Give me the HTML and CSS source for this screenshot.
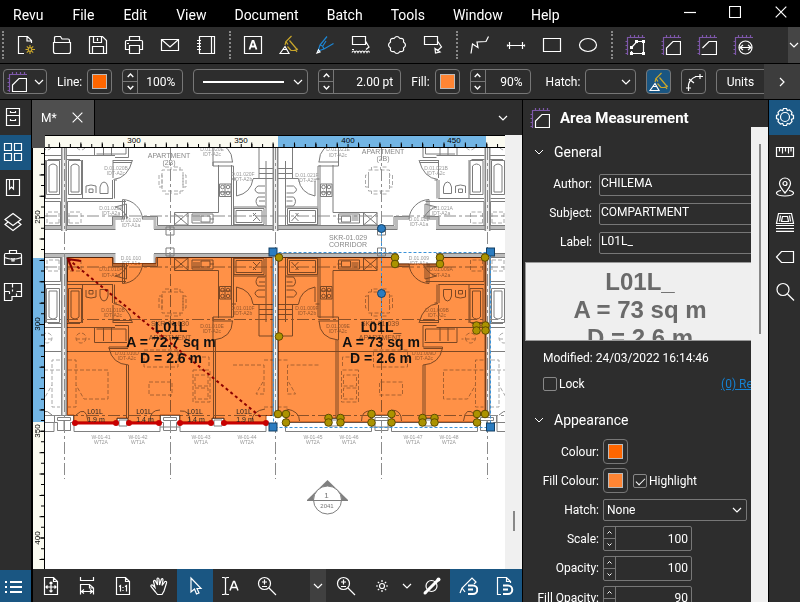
FILE: index.html
```
<!DOCTYPE html>
<html lang="en">
<head>
<meta charset="utf-8">
<title>Revu</title>
<link rel="stylesheet" href="styles.css">
</head>
<body>
<svg class="sprite" aria-hidden="true">
  <symbol id="i-new" viewBox="0 0 20 20"><path d="M8 18.500H2.500V1.500H11.500L15.500 5.500V8M11 2V6H15"/><path class="gold" d="M14 10v2.500M14 16v3M9.500 14.500h3M15.500 14.500h3.500M10.800 11.300l2 2M17.200 11.300l-2 2M10.800 17.700l2-2M17.200 17.700l-2-2"/><circle class="gold" cx="14" cy="14.500" r="1.800"/></symbol>
  <symbol id="i-open" viewBox="0 0 20 20"><path d="M2.500 7.500V2.500Q2.500 1.500 4 1.500H8.500L10 4H16Q17.500 4 17.500 5.500V7.500M1.500 7.500H18.500V16.500Q18.500 18.500 16.500 18.500H3.500Q1.500 18.500 1.500 16.500Z"/></symbol>
  <symbol id="i-save" viewBox="0 0 20 20"><path d="M1.500 1.500H14.500L18.500 5.500V18.500H1.500ZM5.500 1.500V7.500H13.500V1.500M9.500 3V6M4.500 18.500V11.500H15.500V18.500"/></symbol>
  <symbol id="i-print" viewBox="0 0 20 20"><path d="M5.500 5.500V1.500H15.500V5.500M5 14.500H1.500V6.500Q1.500 5.500 2.500 5.500H17.500Q18.500 5.500 18.500 6.500V14.500H15.500M5.500 10.500H15.500V18.500H5.500ZM3 8.500H5"/></symbol>
  <symbol id="i-mail" viewBox="0 0 20 20"><path d="M1.500 4.500H18.500V15.500H1.500ZM1.500 4.500L10 12L18.500 4.500"/></symbol>
  <symbol id="i-book" viewBox="0 0 20 20"><path d="M3.500 1.500H18.500V18.500H3.500ZM15.500 1.500V18.500M1 5.500H5M1 8.500H5M1 11.500H5M1 14.500H5"/></symbol>
  <symbol id="i-text" viewBox="0 0 20 20"><path d="M1.500 1.500H18.500V18.500H1.500Z"/><path stroke-width="1.800" d="M6.500 14.500L9.500 6H10.500L13.500 14.500M7.500 11.500H12.500"/></symbol>
  <symbol id="i-marker" viewBox="0 0 20 20"><path class="gold" d="M12.500 1L7 6.500L9 9.500M10.500 5.500L18.500 15M7 6.500L6 10M12 15.500H15L19 14M8.500 11.500L12 15.500M16.500 15L18 17"/><path d="M1 18.500L6 11.500L10 18.500ZM4 14.500H7.500"/></symbol>
  <symbol id="i-pen" viewBox="0 0 20 20"><path class="sky" d="M12 1.500L5 10L3 16L9 14L18.500 8.500M5 10Q8 10.500 9 14M11 6L7.500 11.500"/><path d="M2 18L3.500 15L5 17Z"/></symbol>
  <symbol id="i-callcloud" viewBox="0 0 20 20"><path d="M1.500 1.500H14.500V9.500H1.500ZM14.500 6L18 12L15 14.500M1 17.500q1.500-3 3 0q1.500-3 3 0q1.500-3 3 0q1.500-3 3 0q1.500-3 3 0q1.500-3 2.500 0M1 14.500H3"/></symbol>
  <symbol id="i-cloud" viewBox="0 0 20 20"><path d="M7 3.500Q10-.5 13 3.500Q17.500 3 16.500 7Q20.500 10 16.500 13Q17.500 17 13 16.500Q10 20.500 7 16.500Q2.500 17 3.500 13Q-.5 10 3.500 7Q2.500 3 7 3.500Z"/></symbol>
  <symbol id="i-callout" viewBox="0 0 20 20"><path d="M1.500 1.500H14.500V9.500H1.500ZM14.500 6L18.500 12L14 16M12 13.500L12.500 18L17 17Z"/></symbol>
  <symbol id="i-poly" viewBox="0 0 20 20"><path d="M1 18.500L2.500 9L8 12.500L7 7L16 6.500L18.500 1.500"/></symbol>
  <symbol id="i-length" viewBox="0 0 20 20"><path d="M1 10.500H19M3.500 7V14M16.500 7V14M1.500 9.500V11.500M18.500 9.500V11.500"/></symbol>
  <symbol id="i-rect" viewBox="0 0 20 20"><path d="M1.500 3.500H18.500V16.500H1.500Z"/></symbol>
  <symbol id="i-oval" viewBox="0 0 20 20"><ellipse cx="10" cy="10" rx="8.500" ry="6.500"/></symbol>
  <symbol id="i-frame" viewBox="0 0 20 20"><path class="violet" d="M2.500 20V2.500H20M.5 6.500H2M.5 10.500H2M.5 14.500H2M.5 18.500H2M5.500 0V2M9.500 0V2M13.500 0V2M17.500 0V2"/></symbol>
  <symbol id="i-perim" viewBox="0 0 20 20"><use href="#i-frame"/><path d="M6.500 12.500L12 6.500H18.500V18.500H6.500V16"/><path class="solid" d="M5 11h3v3h-3zM10 5h3v3h-3zM17 5h3v3h-3zM17 17h3v3h-3zM5 17h3v3h-3z"/></symbol>
  <symbol id="i-area" viewBox="0 0 20 20"><use href="#i-frame"/><path d="M5.500 19V13L12 6.500H19.500V19.500H5.500Z"/></symbol>
  <symbol id="i-polylen" viewBox="0 0 20 20"><use href="#i-frame"/><path d="M5.500 13L12 6.500H19.500V19.500H4.500"/></symbol>
  <symbol id="i-diam" viewBox="0 0 20 20"><use href="#i-frame"/><circle cx="12.500" cy="12.500" r="6.500"/><path d="M7 12.500H18M10 10L7 12.500L10 15M15 10L18 12.500L15 15"/></symbol>
  <symbol id="i-arc" viewBox="0 0 20 20"><path d="M4.500 15Q4 8 12 4.500M4.500 13V19M2 16H7M11 4.500H19M16 2V7M5 7l5 4"/></symbol>
  <symbol id="i-down" viewBox="0 0 10 10"><path d="M1 3L5 7L9 3"/></symbol>
  <symbol id="i-up" viewBox="0 0 10 10"><path d="M1 7L5 3L9 7"/></symbol>
  <symbol id="i-right" viewBox="0 0 10 10"><path d="M3 1L7 5L3 9"/></symbol>
  <symbol id="i-x" viewBox="0 0 12 12"><path d="M.7.7L11.300 11.300M11.300.7L.7 11.300"/></symbol>
  <symbol id="i-min" viewBox="0 0 12 12"><path d="M0 6.500H12"/></symbol>
  <symbol id="i-max" viewBox="0 0 12 12"><path d="M.5.5H11.500V11.500H.5Z"/></symbol>
  <symbol id="i-cabinet" viewBox="0 0 20 20"><path d="M3.500 1.500H16.500V18.500H3.500ZM3.500 8.500H16.500M7.500 4V5.500H12.500V4M7.500 12V13.500H12.500V12"/></symbol>
  <symbol id="i-grid" viewBox="0 0 20 20"><path d="M1.500 1.500H8.500V8.500H1.500ZM11.500 1.500H18.500V8.500H11.500ZM1.500 11.500H8.500V18.500H1.500ZM11.500 11.500H18.500V18.500H11.500Z"/></symbol>
  <symbol id="i-bookmark" viewBox="0 0 20 20"><path d="M3.500 2.500H16.500V18.500H3.500ZM6.500 2.500V12L8.500 10L10.500 12V2.500"/></symbol>
  <symbol id="i-layers" viewBox="0 0 20 20"><path d="M10 1.500L18 7.500L10 13.500L2 7.500ZM5 10L2 12.500L10 18.500L18 12.500L15 10"/></symbol>
  <symbol id="i-case" viewBox="0 0 20 20"><path d="M2.500 6.500H17.500Q18.500 6.500 18.500 8V17.500H1.500V8Q1.500 6.500 2.500 6.500ZM6.500 6V3.500H13.500V6M1.500 10.500Q10 14 18.500 10.500M9 11v3h2v-3"/></symbol>
  <symbol id="i-plan" viewBox="0 0 20 20"><path d="M9 18.500V14.500H13.500V11.500M13.500 14.500H18.500V1.500H9.500V5.500M1.500 9V1.500H9.500M9 18.500H1.500V9.500H6.500M9.500 7.500V9.500M13.500 9.500H18.500M6.500 9.500V12"/></symbol>
  <symbol id="i-list" viewBox="0 0 20 20"><path stroke-width="2" d="M6 5H18M6 10H18M6 15H18M1 5H3M1 10H3M1 15H3"/></symbol>
  <symbol id="i-gear" viewBox="0 0 20 20"><circle cx="10" cy="10" r="4.500"/><path d="M8.500 1.500H11.500L12.300 3.500L14.600 2.900L17 5.400L16.400 7.600L18.500 8.500V11.500L16.400 12.400L17 14.600L14.600 17L12.300 16.400L11.500 18.500H8.500L7.700 16.400L5.400 17L3 14.600L3.600 12.400L1.500 11.500V8.500L3.600 7.600L3 5.400L5.400 2.900L7.700 3.500Z"/></symbol>
  <symbol id="i-ruler" viewBox="0 0 20 20"><path d="M1.500 5.500H18.500V14.500H1.500ZM4.500 6V9.500M7.500 6V11.500M10.500 6V9.500M13.500 6V11.500M16 6V9.500"/></symbol>
  <symbol id="i-pin" viewBox="0 0 20 20"><path d="M10 16Q4.500 9.500 4.500 6.500A5.500 5.500 0 0 1 15.500 6.500Q15.500 9.500 10 16ZM6 13.500Q1 14.500 1.500 16.500Q3 19 10 19Q17 19 18.500 16.500Q19 14.500 14 13.500"/><circle cx="10" cy="6.500" r="2"/></symbol>
  <symbol id="i-sets" viewBox="0 0 20 20"><path d="M3.500 1.500H16.500L18.500 11.500H1.500ZM7.500 4.500H12.500L13.500 9.500H6.500ZM5.500 3.500L4.500 9.500M14.500 3.500L15.500 9.500M1 13.500H19M1 16.500H19M1 19.300H19"/></symbol>
  <symbol id="i-tag" viewBox="0 0 20 20"><path d="M1.500 10L6.500 4.500H18.500V15.500H6.500Z"/></symbol>
  <symbol id="i-search" viewBox="0 0 20 20"><circle cx="8" cy="7.500" r="6"/><path d="M12.500 12L19 18.500"/></symbol>
  <symbol id="i-fit" viewBox="0 0 20 20"><path d="M3.500 1.500H12.500L16.500 5.500V18.500H3.500ZM12.500 1.500V5.500H16.500M10 6V16M5 11H15M8.500 7.500L10 6L11.500 7.500M8.500 14.500L10 16L11.500 14.500M6.500 9.500L5 11L6.500 12.500M13.500 9.500L15 11L13.500 12.500"/></symbol>
  <symbol id="i-width" viewBox="0 0 20 20"><path d="M3.500 1V4.500H16.500V1M3.500 18.500V8.500H12.500L16.500 12V18.500M12.500 8.500V12H16.500M4.500 15.500H15.500M7 13.500L4.500 15.500L7 17.500M13 13.500L15.500 15.500L13 17.500"/></symbol>
  <symbol id="i-actual" viewBox="0 0 20 20"><path d="M3.500 1.500H12.500L16.500 5.500V18.500H3.500ZM12.500 1.500V5.500H16.500M6 10.500L7.500 9.500V15.500M12 10.500L13.500 9.500V15.500M10 11v1M10 14v1"/></symbol>
  <symbol id="i-hand" viewBox="0 0 20 20"><path d="M6.500 16L2 10.500Q1.500 8.500 3.500 9L6 11.500L4.500 5.500Q5 3.500 6.500 5L8.500 9L8 3Q8.700 1 10 3L10.500 9L12.500 3Q14 2 14 4L13 9.500L16 5.500Q18 5 17.500 7L15 15L13 18.500H8.500Z"/></symbol>
  <symbol id="i-cursor" viewBox="0 0 20 20"><path d="M6 2V16L9.500 13L11.500 18L14 17L12 12.500H16Z"/></symbol>
  <symbol id="i-select" viewBox="0 0 20 20"><path d="M1 1.500H3Q4.500 1.500 4.500 3V17Q4.500 18.500 3 18.500H1M8 1.500H6Q4.500 1.500 4.500 3M8 18.500H6Q4.500 18.500 4.500 17"/><path stroke-width="1.500" d="M9 14.500L12.500 5.500H13.500L17 14.500M10.500 11.500H15.500"/></symbol>
  <symbol id="i-zoom" viewBox="0 0 20 20"><circle cx="7.500" cy="7.500" r="6"/><path d="M12 12L19 19M7.500 3.500V8.500M5 6H10M5 10.500H10"/></symbol>
  <symbol id="i-sun" viewBox="0 0 20 20"><circle cx="10" cy="10" r="2.500"/><path d="M10 4V6M10 14V16M4 10H6M14 10H16M5.800 5.800L7.200 7.200M12.800 12.800L14.200 14.200M14.200 5.800L12.800 7.200M7.200 12.800L5.800 14.200"/></symbol>
  <symbol id="i-compare" viewBox="0 0 20 20"><circle cx="9.500" cy="10" r="5.500"/><path stroke-width="3" d="M3 17L16 4"/><circle class="solid" cx="3" cy="17" r="1.500"/><circle class="solid" cx="16.500" cy="3.500" r="2"/></symbol>
  <symbol id="i-snapa" viewBox="0 0 20 20"><path d="M2 17L4 12L14 2L18 6L16 8M4 12L7 16"/><path stroke-width="2" d="M10 9.500H15A3 3 0 0 1 15 18H10M10 13.500H15"/></symbol>
  <symbol id="i-snapb" viewBox="0 0 20 20"><path d="M7 18.500H3.500V1.500H12.500L16.500 5.500V7M12.500 1.500V5.500H16.500"/><path stroke-width="2" d="M9 9.500H14A3 3 0 0 1 14 18H9M9 13.500H14"/></symbol>
</svg>

<div class="app">
  <header class="menubar">
    <nav class="menus" aria-label="Main menu">
      <button>Revu</button><button>File</button><button>Edit</button><button>View</button><button>Document</button><button>Batch</button><button>Tools</button><button>Window</button><button>Help</button>
    </nav>
    <div class="window-controls">
      <button aria-label="Minimise"><svg><use href="#i-min"/></svg></button>
      <button aria-label="Maximise"><svg><use href="#i-max"/></svg></button>
      <button aria-label="Close"><svg><use href="#i-x"/></svg></button>
    </div>
  </header>

  <div class="toolbar" role="toolbar" aria-label="Tools">
    <span class="grip first"></span>
    <button aria-label="New"><svg><use href="#i-new"/></svg></button>
    <button aria-label="Open"><svg><use href="#i-open"/></svg></button>
    <button aria-label="Save"><svg><use href="#i-save"/></svg></button>
    <button aria-label="Print"><svg><use href="#i-print"/></svg></button>
    <button aria-label="Email"><svg><use href="#i-mail"/></svg></button>
    <button aria-label="Binder"><svg><use href="#i-book"/></svg></button>
    <span class="grip"></span>
    <button aria-label="Text box"><svg><use href="#i-text"/></svg></button>
    <button aria-label="Highlight"><svg><use href="#i-marker"/></svg></button>
    <button aria-label="Pen"><svg><use href="#i-pen"/></svg></button>
    <button aria-label="Cloud callout"><svg><use href="#i-callcloud"/></svg></button>
    <button aria-label="Cloud"><svg><use href="#i-cloud"/></svg></button>
    <button aria-label="Callout"><svg><use href="#i-callout"/></svg></button>
    <span class="grip"></span>
    <button aria-label="Polyline"><svg><use href="#i-poly"/></svg></button>
    <button aria-label="Dimension"><svg><use href="#i-length"/></svg></button>
    <button aria-label="Rectangle"><svg><use href="#i-rect"/></svg></button>
    <button aria-label="Ellipse"><svg><use href="#i-oval"/></svg></button>
    <span class="grip"></span>
    <button aria-label="Perimeter"><svg><use href="#i-perim"/></svg></button>
    <button aria-label="Area"><svg><use href="#i-area"/></svg></button>
    <button aria-label="Polylength"><svg><use href="#i-polylen"/></svg></button>
    <button aria-label="Diameter"><svg><use href="#i-diam"/></svg></button>
    <button class="overflow" aria-label="More tools"><svg class="tiny"><use href="#i-down"/></svg></button>
  </div>

  <div class="propbar">
    <div class="props">
      <button class="box tool-pick" aria-label="Area tool"><svg><use href="#i-area"/></svg><svg class="tiny"><use href="#i-down"/></svg></button>
      <div class="field"><span>Line:</span><button class="box swatch-btn" aria-label="Line colour"><i class="swatch line"></i></button></div>
      <div class="spin w61"><div class="steps"><button aria-label="More"><svg><use href="#i-up"/></svg></button><button aria-label="Less"><svg><use href="#i-down"/></svg></button></div><input aria-label="Line opacity" value="100%"></div>
      <div class="pick line-style"><select aria-label="Line style"><option></option></select><i class="stroke-sample"></i><svg class="tiny"><use href="#i-down"/></svg></div>
      <div class="spin w83"><div class="steps"><button aria-label="More"><svg><use href="#i-up"/></svg></button><button aria-label="Less"><svg><use href="#i-down"/></svg></button></div><input aria-label="Line width" value="2.00 pt"></div>
      <div class="field"><span>Fill:</span><button class="box swatch-btn" aria-label="Fill colour"><i class="swatch fill"></i></button></div>
      <div class="spin w61"><div class="steps"><button aria-label="More"><svg><use href="#i-up"/></svg></button><button aria-label="Less"><svg><use href="#i-down"/></svg></button></div><input aria-label="Fill opacity" value="90%"></div>
      <div class="field hatch"><label for="hatch-top">Hatch:</label><div class="pick"><select id="hatch-top"><option></option></select><svg class="tiny"><use href="#i-down"/></svg></div></div>
      <button class="box active" aria-label="Highlight fill"><svg><use href="#i-marker"/></svg></button>
      <button class="box" aria-label="Arc"><svg><use href="#i-arc"/></svg></button>
      <button class="box units">Units</button>
    </div>
    <button class="overflow" aria-label="More properties"><svg class="tiny"><use href="#i-right"/></svg></button>
  </div>

  <main class="main">
    <nav class="rail left" aria-label="Left panels">
      <button aria-label="File access"><svg><use href="#i-cabinet"/></svg></button>
      <button class="active" aria-label="Thumbnails"><svg><use href="#i-grid"/></svg></button>
      <button aria-label="Bookmarks"><svg><use href="#i-bookmark"/></svg></button>
      <button aria-label="Layers"><svg><use href="#i-layers"/></svg></button>
      <button aria-label="Tool chest"><svg><use href="#i-case"/></svg></button>
      <button aria-label="Spaces"><svg><use href="#i-plan"/></svg></button>
      <button class="active last" aria-label="Markups list"><svg><use href="#i-list"/></svg></button>
    </nav>

    <section class="document">
      <div class="tabs">
        <div class="tab"><span>M*</span><button aria-label="Close tab"><svg class="tab-x"><use href="#i-x"/></svg></button></div>
        <button class="tab-menu" aria-label="Tab list"><svg class="tiny"><use href="#i-down"/></svg></button>
      </div>
      <div class="view">
        <svg class="sheet" role="img" aria-label="Floor plan">
          <defs>
            <g id="rooms">
              <path class="w3" d="M64 255.500H114V264.500H125M142 264.500H155V255.500H276"/>
              <path class="w1" d="M64 253.500H115.500M154 253.500H276M64 257.500H112.500V266.500H125M142 266.500H157.500V257.500H276"/>
              <path class="w1" d="M67.500 257V281.500H126M67.500 284.500H113M114.500 284.500V303H117M112.500 284V303M82.500 284V323"/>
              <path class="dash" d="M69 260H81V271H69Z"/>
              <path class="w1" d="M122.500 264V283.500A21 21 0 0 0 142.500 264M126.500 264V279L115 276Q122 275 128 265M124.500 264V283"/>
              <path class="w1" d="M68.500 288.500H81.500V322.500H68.500ZM71 291H79V317Q75 321 71 317Z"/>
              <path class="w1" d="M86 290V297Q91 299 96 297V290M89 290.500H93V294H89ZM100 289.500H108V296Q107 301 104 301Q101 301 100 296Z"/>
              <path class="w1" d="M113.500 303.500Q128 305 132.500 323M113 305V323"/>
              <path class="w1" d="M67 323.500H80M67 327.500H115M113 320.500H132M113 322.500H132M115 325.500H128.500V347H109V348.500H128"/>
              <path class="w1" d="M94.500 327V342.500H127M96.500 329H126V341M103.500 328V341M111.500 328V341"/>
              <path class="w1" d="M109 348Q112 364 128.500 365M126.500 365V418M128.500 365V418"/>
              <path class="w1" d="M174.500 258V270.500H218.500V318M174 258H188V270M188 258L174 270M174 258L188 270M192 260H213V269H192ZM201 261H210V267H201ZM193 263H200M193 265H200M193 267H200M210 264H214M170 252V257"/>
              <path class="w1" d="M231.500 257V318M233.500 257V317H213V321H233M213 317V340M215.500 340V420M213.500 340V420"/>
              <path class="w1" d="M219.500 286.500H231V299H219.500ZM220 291H231M225 287V299"/><circle class="w1" cx="222.500" cy="290" r="1.800"/><circle class="w1" cx="228" cy="290" r="1.800"/><circle class="w1" cx="222.500" cy="296" r="1.800"/><circle class="w1" cx="228" cy="296" r="1.800"/>
              <path class="w1" d="M234 258.500H264V274.500H234ZM236 260.500H262V272.500H236ZM253 270L260 262M253 267L256 270M253 262L257 266M234 276H266V257M266 276V322"/>
              <path class="w1" d="M265 277H258Q254 282 258 286H265M259 282H265M265 290H258Q252 293 258 297H265"/>
              <path class="w1" d="M236.500 302V287Q251 290 253 304M253 304.500H276M259 309.500H276M259 314.500H276M259 304V336H276M236 304H232"/>
              <path class="w1" d="M213.500 340Q232 338 232.500 321"/>
              <path class="dash" d="M162 292H183V313H162ZM165 289h6v3M174 289h6v3M165 316h6v-3M174 316h6v-3M159 296h3v12h-3zM183 296h3v12h-3z"/>
              <path class="dash" d="M68 370H108V399H84L76 385M68 360H76V407H68M149 382H172V395H149ZM193 370H210V402H193ZM195 375H208V386H195ZM195 388H208V399H195ZM144 350H178V367H144ZM196 357H209V366M233 365H264V394H256L264 380M264 360H276M264 407H276M76 339H90"/>
              <circle class="dash" cx="81" cy="338" r="5"/>
              <path class="w1" d="M166 248H174V256H166Z"/>
            </g>
            <g id="base">
              <path class="col" d="M54.500 415.500H73.500V422.500H70.500V430.500H57.500V422.500H54.500ZM57.500 417.500H70.500V420.500H57.500ZM57.500 423V430M64 420V430"/>
              <path class="col" d="M74 422.500H117V418.500H128V422.500H160V431.500H74ZM119 420H127V426H119Z"/>
              <path class="col" d="M180 422.500H212V418.500H224V422.500H266V431.500H180ZM214 420H222V426H214Z"/>
              <path class="col" d="M160.500 415.500H179.500V422.500H176.500V430.500H163.500V422.500H160.500ZM163.500 417.500H176.500V420.500H163.500ZM160 427H180"/>
              <path class="w1" d="M76 415Q86 405 88 421M150 421Q150 410 160 410M180 411Q190 410 190 421M252 421Q252 411 265 409"/>
            </g>
            <g id="dot"><circle r="3.800"/></g>
          </defs>
          <g transform="translate(-32 -135)">
            <rect class="paper" x="45" y="147" width="4000" height="4000"/>
            <g class="plan">
              <use href="#rooms"/><use href="#rooms" transform="translate(551.500) scale(-1 1)"/><use href="#rooms" transform="translate(128) scale(-1 1)"/><use href="#rooms" transform="translate(423)"/>
              <g transform="translate(0 483) scale(1 -1)"><use href="#rooms"/><use href="#rooms" transform="translate(551.500) scale(-1 1)"/><use href="#rooms" transform="translate(128) scale(-1 1)"/><use href="#rooms" transform="translate(423)"/></g>
              <use href="#base"/><use href="#base" transform="translate(551.500) scale(-1 1)"/><use href="#base" transform="translate(128) scale(-1 1)"/><use href="#base" transform="translate(423)"/>
              <path class="axis" d="M45 216H505M45 267H505M45 319.500H505M45 415.500H505"/>
              <path class="w1" d="M45 351.500H505"/>
              <path class="party" d="M64 148V231M64 257V415M275.500 148V231M275.500 257V415M487.500 148V231M487.500 257V415"/>
              <path class="party-in" d="M64 148V231M64 257V415M275.500 148V231M275.500 257V415M487.500 148V231M487.500 257V415"/>
              <path class="axis" d="M64.500 148V479M170.500 148V479M275.500 148V479M381.500 148V479M487.500 148V479"/>
              <g class="note">
                <text x="169" y="158">APARTMENT</text><text x="169" y="165">(2B)</text><text x="383" y="154">APARTMENT</text><text x="383" y="161">(2B)</text>
                <text x="348" y="240">SKR-01.029</text><text x="348" y="247">CORRIDOR</text>
                <text x="170" y="326">SKR-01.030</text><text x="170" y="340">APARTMENT</text><text x="380" y="326">SKR-01.039</text><text x="380" y="340">APARTMENT</text>
              </g>
              <g class="fine">
                <text x="116" y="170">D.01.020B</text><text x="116" y="175">IDT-A2c</text><text x="111" y="210">D.01.020A</text><text x="111" y="215">IDT-A2a</text><text x="131" y="222">D.01.020</text><text x="131" y="227">IDT-A1a</text><text x="212" y="151">D.01.020E</text><text x="212" y="156">IDT-A2c</text><text x="243" y="176">D.01.020F</text><text x="243" y="181">IDT-A2b</text>
                <text x="338" y="151">D.01.021E</text><text x="338" y="157">IDT-A2c</text><text x="307" y="177">D.01.021F</text><text x="307" y="182">IDT-A2b</text><text x="436" y="170">D.01.021B</text><text x="436" y="175">IDT-A2c</text><text x="441" y="210">D.01.021A</text><text x="441" y="215">IDT-A2a</text><text x="419" y="221">D.01.021</text><text x="419" y="226">IDT-A1a</text>
                <text x="131" y="260">D.01.010</text><text x="131" y="265">IDT-A1a</text><text x="111" y="271">D.01.010A</text><text x="111" y="277">IDT-A2a</text><text x="113" y="312">D.01.010B</text><text x="113" y="317">IDT-A2c</text><text x="243" y="310">D.01.010F</text><text x="243" y="315">IDT-A2b</text><text x="127" y="355">D.01.010D</text><text x="127" y="360">IDT-A2c</text><text x="212" y="328">D.01.010E</text><text x="212" y="333">IDT-A2c</text>
                <text x="419" y="260">D.01.009</text><text x="419" y="265">IDT-A1a</text><text x="441" y="271">D.01.009A</text><text x="441" y="277">IDT-A2a</text><text x="307" y="310">D.01.009F</text><text x="307" y="315">IDT-A2b</text><text x="437" y="312">D.01.009B</text><text x="437" y="317">IDT-A2c</text><text x="338" y="328">D.01.009E</text><text x="338" y="333">IDT-A2c</text><text x="424" y="355">D.01.009D</text><text x="424" y="360">IDT-A2c</text>
                <text x="101" y="439">W-01-41</text><text x="101" y="444">WT2A</text><text x="138" y="439">W-01-42</text><text x="138" y="444">WT1A</text><text x="201" y="439">W-01-43</text><text x="201" y="444">WT1A</text><text x="247" y="439">W-01-44</text><text x="247" y="444">WT2A</text>
                <text x="313" y="439">W-01-45</text><text x="313" y="444">WT2A</text><text x="349" y="439">W-01-46</text><text x="349" y="444">WT1A</text><text x="413" y="439">W-01-47</text><text x="413" y="444">WT1A</text><text x="449" y="439">W-01-48</text><text x="449" y="444">WT2A</text>
              </g>
              <path class="marker" d="M307 500L327.500 480L348 500Z"/><circle class="bubble" cx="327.500" cy="500" r="14"/><path class="w1" d="M307 500.500H348"/>
              <text class="mark-no" x="326.500" y="498">1</text><text class="mark-ref" x="327" y="508">2041</text>
            </g>
            <path class="area" d="M67.500 257.500H113V263.500H156V257.500H272V415.500H266V422H224V418H212V422H180V415H160V422H128V418H117V422H74V415H67.500Z"/>
            <path class="area" d="M278.500 257.500H395V264H440V257.500H486V415H477V422H434V418H422V422H392V415H371V422H340V418H328V422H286V415H278.500Z"/>
            <path class="lead" d="M68 259L262 418"/><path class="head" d="M73 271L68 259L81 261"/>
            <path class="red" d="M75 423H117M129 423H160M180 423H212M224 423H266"/>
            <g class="red-dot"><circle cx="75" cy="423" r="3"/><circle cx="116" cy="423" r="3"/><circle cx="129" cy="423" r="3"/><circle cx="159" cy="423" r="3"/><circle cx="180" cy="423" r="3"/><circle cx="211" cy="423" r="3"/><circle cx="224" cy="423" r="3"/><circle cx="266" cy="423" r="3"/></g>
            <g class="big"><text x="171" y="332">L01L</text><text x="171" y="347">A = 72.7 sq m</text><text x="171" y="363">D = 2.6 m</text><text x="381" y="332">L01L_</text><text x="381" y="347">A = 73 sq m</text><text x="381" y="363">D = 2.6 m</text></g>
            <g class="small"><text x="95" y="414">L01L</text><text x="96" y="422">1.9 m</text><text x="144" y="414">L01L</text><text x="145" y="422">1.4 m</text><text x="195" y="414">L01L</text><text x="196" y="422">1.4 m</text><text x="244" y="414">L01L</text><text x="245" y="422">1.9 m</text></g>
            <path class="sel" d="M273.500 252.500H490.500V427.500H273.500ZM381.500 228V320"/>
            <g class="sq"><rect x="269" y="248" width="8" height="8"/><rect x="486.500" y="248" width="8" height="8"/><rect x="269" y="423" width="8" height="8"/><rect x="486.500" y="423" width="8" height="8"/><circle cx="381.500" cy="228.500" r="4"/><circle cx="381.500" cy="293.500" r="4"/></g>
            <g class="pts">
              <use href="#dot" x="279" y="257.500"/><use href="#dot" x="395" y="257.500"/><use href="#dot" x="395" y="264"/><use href="#dot" x="440" y="257.500"/><use href="#dot" x="440" y="264"/><use href="#dot" x="485" y="257.500"/><use href="#dot" x="279" y="336.500"/>
              <use href="#dot" x="278" y="414"/><use href="#dot" x="286" y="414"/><use href="#dot" x="286" y="422.500"/><use href="#dot" x="328.500" y="418"/><use href="#dot" x="328.500" y="422.500"/><use href="#dot" x="340.500" y="418"/><use href="#dot" x="340.500" y="422.500"/><use href="#dot" x="371.500" y="414"/><use href="#dot" x="371.500" y="422.500"/><use href="#dot" x="391.500" y="414"/><use href="#dot" x="391.500" y="422.500"/><use href="#dot" x="422.500" y="418"/><use href="#dot" x="422.500" y="422.500"/><use href="#dot" x="434.500" y="418"/><use href="#dot" x="434.500" y="422.500"/><use href="#dot" x="477" y="414"/><use href="#dot" x="477" y="422.500"/><use href="#dot" x="485" y="414"/><use href="#dot" x="476.500" y="325.500"/><use href="#dot" x="476.500" y="330.500"/><use href="#dot" x="485.500" y="325.500"/><use href="#dot" x="485.500" y="330.500"/>
            </g>
            <rect class="rule" x="45" y="135" width="4000" height="12"/><rect class="rule" x="33" y="148" width="11" height="4000"/><rect class="corner" x="32" y="135" width="13" height="13"/>
            <rect class="span" x="278" y="135" width="208" height="12"/><rect class="span" x="33" y="258" width="11" height="164"/>
            <path class="edge" d="M45 147.500H4000M44.500 148V4000M45 135.500H4000M32.500 148V4000"/>
            <path class="t-min" d="M48.500 145.500H505M42.500 153V568"/><path class="t-maj" d="M59 145H505M42 174.500V568"/>
            <g class="nums"><text x="134" y="143">300</text><text x="241" y="143">350</text><text x="348" y="143">400</text><text x="454" y="143">450</text><text transform="translate(40 217) rotate(-90)">250</text><text transform="translate(40 324) rotate(-90)">300</text><text transform="translate(40 431) rotate(-90)">350</text><text transform="translate(40 538) rotate(-90)">400</text></g>
          </g>
        </svg>
        <div class="vscroll"><i></i></div>
      </div>
      <div class="navbar">
        <button aria-label="Fit page"><svg><use href="#i-fit"/></svg></button>
        <button aria-label="Fit width"><svg><use href="#i-width"/></svg></button>
        <button aria-label="Actual size"><svg><use href="#i-actual"/></svg></button>
        <button aria-label="Pan"><svg><use href="#i-hand"/></svg></button>
        <button class="active" aria-label="Select"><svg><use href="#i-cursor"/></svg></button>
        <button aria-label="Select text"><svg><use href="#i-select"/></svg></button>
        <button aria-label="Zoom"><svg><use href="#i-zoom"/></svg></button>
        <span class="spacer"></span>
        <button class="drop" aria-label="Zoom level"><svg class="tiny"><use href="#i-down"/></svg></button>
        <button aria-label="Zoom tool"><svg><use href="#i-zoom"/></svg></button>
        <button aria-label="Dim"><svg><use href="#i-sun"/></svg></button>
        <button class="narrow" aria-label="Dim options"><svg class="tiny"><use href="#i-down"/></svg></button>
        <button aria-label="Line weights"><svg><use href="#i-compare"/></svg></button>
        <button class="active" aria-label="Snap to markup"><svg><use href="#i-snapa"/></svg></button>
        <button class="active" aria-label="Snap to content"><svg><use href="#i-snapb"/></svg></button>
      </div>
    </section>

    <aside class="panel">
      <h1><svg><use href="#i-area"/></svg>Area Measurement</h1>
      <div class="panel-body">
        <div class="form">
          <h2><svg><use href="#i-down"/></svg>General</h2>
          <div class="row general"><label for="author">Author:</label><input id="author" value="CHILEMA"></div>
          <div class="row general"><label for="subject">Subject:</label><input id="subject" value="COMPARTMENT"></div>
          <div class="row general"><label for="label">Label:</label><input id="label" value="L01L_"></div>
          <div class="preview"><p>L01L_</p><p>A = 73 sq m</p><p>D = 2.6 m</p></div>
          <p class="modified">Modified: 24/03/2022 16:14:46</p>
          <div class="lock"><label><input type="checkbox">Lock</label><a href="#replies">(0) Replies</a></div>
          <h2 class="second"><svg><use href="#i-down"/></svg>Appearance</h2>
          <div class="row"><span class="name">Colour:</span><button class="box swatch-btn" aria-label="Colour"><i class="swatch line"></i></button></div>
          <div class="row"><span class="name">Fill Colour:</span><button class="box swatch-btn" aria-label="Fill colour"><i class="swatch fill"></i></button><label class="check"><input type="checkbox" checked>Highlight</label></div>
          <div class="row"><label class="name" for="hatch">Hatch:</label><div class="pick wide"><select id="hatch"><option>None</option></select><svg><use href="#i-down"/></svg></div></div>
          <div class="row"><label class="name" for="scale">Scale:</label><div class="spin"><div class="steps"><button aria-label="More"><svg><use href="#i-up"/></svg></button><button aria-label="Less"><svg><use href="#i-down"/></svg></button></div><input id="scale" value="100"></div></div>
          <div class="row tall"><label class="name" for="opacity">Opacity:</label><div class="spin"><div class="steps"><button aria-label="More"><svg><use href="#i-up"/></svg></button><button aria-label="Less"><svg><use href="#i-down"/></svg></button></div><input id="opacity" value="100"></div></div>
          <div class="row tall"><label class="name" for="fillop">Fill Opacity:</label><div class="spin"><div class="steps"><button aria-label="More"><svg><use href="#i-up"/></svg></button><button aria-label="Less"><svg><use href="#i-down"/></svg></button></div><input id="fillop" value="90"></div></div>
        </div>
        <div class="pscroll"><i></i></div>
      </div>
    </aside>

    <nav class="rail right" aria-label="Right panels">
      <button class="active" aria-label="Properties"><svg><use href="#i-gear"/></svg></button>
      <button aria-label="Measurements"><svg><use href="#i-ruler"/></svg></button>
      <button aria-label="Places"><svg><use href="#i-pin"/></svg></button>
      <button aria-label="Sets"><svg><use href="#i-sets"/></svg></button>
      <button aria-label="Tags"><svg><use href="#i-tag"/></svg></button>
      <button aria-label="Search"><svg><use href="#i-search"/></svg></button>
    </nav>
  </main>
</div>
</body>
</html>
```
FILE: styles.css
```
* { box-sizing: border-box; }
html, body { height: 100%; margin: 0; }
body { background: #2d2d2d; color: #fff; font: 12px/16px Roboto, "Liberation Sans", sans-serif; overflow: hidden; }
button, input, select { font: inherit; color: inherit; background: none; border: 0; border-radius: 0; margin: 0; padding: 0; }
h1, h2, p { margin: 0; }
button { display: flex; align-items: center; justify-content: center; flex: none; }
svg { display: block; flex: none; width: 20px; height: 20px; fill: none; stroke: #fff; stroke-width: 1.2; }
.sprite { position: absolute; width: 0; height: 0; }
.gold { stroke: #c9a62b; }
.sky { stroke: #1d86d4; }
.violet { stroke: #7d57a8; }
.solid { fill: #fff; stroke: none; }
svg.tiny { width: 10px; height: 10px; }
button.active { background: #1a5682; }

.app { display: flex; flex-direction: column; height: 100vh; }

.menubar { display: flex; justify-content: space-between; height: 27px; background: #000; flex: none; }
.menus { display: flex; gap: 28px; padding: 3px 0 0 13px; }
.menus button { font-size: 14px; }
.menus button:nth-child(-n+3) { padding-right: 1px; }
.window-controls { display: flex; }
.window-controls button { width: 45px; height: 24px; }
.window-controls button:last-child { width: 43px; padding-left: 4px; }
.window-controls svg { width: 12px; height: 12px; }

.toolbar { display: flex; height: 37px; border-bottom: 1px solid #000; flex: none; }
.toolbar button { width: 36px; }
.toolbar .overflow { width: 12px; margin-left: auto; background: #454545; overflow: hidden; }
.grip { width: 11px; flex: none; display: flex; justify-content: center; padding: 4px 0; }
.grip::before { content: ""; border-left: 2px dotted #888; }
.grip.first { width: 8px; padding-right: 2px; }

.propbar { display: flex; height: 36px; border-bottom: 1px solid #000; flex: none; }
.props { display: flex; align-items: center; gap: 10px; flex: 1; min-width: 0; overflow: hidden; padding-left: 3px; }
.propbar .overflow { width: 36px; background: #3d3d3d; }
.box { width: 25px; height: 25px; border: 1px solid #777; border-radius: 4px; }
.box.tool-pick { width: 44px; gap: 7px; }
.box.units { width: 60px; padding-right: 12px; }
.field { display: flex; align-items: center; gap: 5px; flex: none; }
.hatch { padding-left: 5px; }
.swatch { width: 15px; height: 15px; border: 1px solid #bbb; flex: none; }
.swatch.line { background: #f60; }
.swatch.fill { background: #ff8534; }
.spin { display: flex; width: 89px; height: 25px; border: 1px solid #777; border-radius: 4px; overflow: hidden; flex: none; }
.spin.w61 { width: 61px; }
.spin.w83 { width: 83px; }
.steps { display: flex; flex-direction: column; width: 15px; border-right: 1px solid #777; flex: none; }
.steps button { flex: 1; min-height: 0; }
.steps button + button { border-top: 1px solid #777; }
.steps svg { width: 7px; height: 7px; stroke-width: 2; }
.spin input { flex: 1; width: 0; padding-right: 7px; text-align: right; }
.pick { position: relative; display: flex; align-items: center; width: 51px; height: 25px; border: 1px solid #777; border-radius: 4px; flex: none; }
.pick select { appearance: none; width: 100%; height: 100%; padding-left: 3px; }
.pick option { background: #2d2d2d; }
.pick svg { position: absolute; right: 4px; pointer-events: none; }
.line-style { width: 115px; }
.stroke-sample { position: absolute; left: 9px; right: 23px; height: 2px; background: #fff; }

.main { display: flex; flex: 1; min-height: 0; }
.rail { display: flex; flex-direction: column; width: 32px; flex: none; }
.rail.left { border-right: 1px solid #000; }
.rail.right { border-left: 1px solid #000; }
.rail button { height: 35px; padding: 0 5px 1px 0; }
.rail.right button { padding: 0 0 1px 1px; }
.rail .last { height: 32px; margin-top: auto; padding: 1px 4px 0 0; }

.document { display: flex; flex-direction: column; flex: 1; min-width: 0; }
.tabs { display: flex; justify-content: space-between; height: 35px; flex: none; }
.tab { display: flex; align-items: center; gap: 15px; width: 63px; padding-left: 9px; background: #4f4f4f; border-right: 1px solid #000; }
svg.tab-x { width: 11px; height: 11px; }
.tab-menu { width: 38px; }
.view { display: flex; flex: 1; min-height: 0; }
.sheet { flex: 1; min-width: 0; height: 100%; stroke: none; overflow: hidden; }
.vscroll { width: 17px; background: #f0f0f0; display: flex; align-items: flex-end; justify-content: center; padding-bottom: 38px; }
.vscroll i { width: 2px; height: 20px; background: #888; }
.navbar { display: flex; height: 33px; border-left: 1px solid #000; flex: none; }
.navbar button { width: 36px; }
.navbar .spacer { flex: 1; }
.navbar .drop { width: 16px; background: #404040; margin-right: 2px; }
.navbar .narrow { width: 14px; }

.panel { display: flex; flex-direction: column; width: 246px; border-left: 1px solid #000; flex: none; }
.panel h1 { display: flex; align-items: center; gap: 10px; height: 27px; padding: 9px 0 0 7px; font-size: 15px; line-height: 18px; font-weight: 700; }
.panel-body { display: flex; flex: 1; min-height: 0; }
.form { flex: 1; min-width: 0; overflow: hidden; }
.pscroll { width: 17px; background: #f0f0f0; display: flex; justify-content: center; padding-top: 17px; }
.pscroll i { width: 2px; height: 190px; background: #888; }
.form h2 { display: flex; align-items: center; gap: 10px; height: 20px; margin: 15px 0 7px 11px; font-size: 14px; font-weight: 400; }
.form h2 svg { width: 10px; height: 10px; stroke-width: 1; }
.form h2.second { margin: 18px 0 7px 11px; }
.row { display: flex; align-items: center; height: 29px; }
.row.general { margin-right: -30px; gap: 7px; }
.row.general label { width: 69px; text-align: right; }
.row.general input { flex: 1; min-width: 0; height: 22px; margin-top: 2px; padding: 0 1px 3px; border: 1px solid #777; border-radius: 2px; }
.preview { height: 79px; margin: 6px 0 0 2px; padding: 5px 0 0 3px; border: 1px solid #999; border-right: 0; overflow: hidden; background: #efefef; color: #6a6a6a; font: bold 24px/28px "Liberation Sans", sans-serif; text-align: center; }
.modified { margin: 9px 0 0 20px; }
.lock { display: flex; justify-content: space-between; margin: 10px -27px 0 20px; }
.lock a { color: #1580d0; }
.lock label, .check { display: flex; align-items: center; gap: 2px; }
.check { margin-left: 5px; }
input[type="checkbox"] { appearance: none; width: 14px; height: 14px; border: 1px solid #888; border-radius: 2px; display: grid; place-items: center; }
input[type="checkbox"]:checked::before { content: ""; width: 8px; height: 4px; border: solid #fff; border-width: 0 0 1px 1px; transform: rotate(-45deg); }
.name { width: 76px; margin-right: 4px; text-align: right; flex: none; }
.row.tall { height: 30px; }
.row .spin { border-radius: 2px; }
.row .steps { width: 12px; }
.row .steps svg { width: 5px; height: 5px; }
.row .spin input { padding-right: 3px; }
.pick.wide { width: 144px; height: 22px; border-radius: 2px; }
.pick.wide svg { width: 10px; height: 10px; }

.paper { fill: #fff; }
.w1 { fill: none; stroke: #7c7c7c; stroke-width: 1; }
.w3 { fill: none; stroke: #bbb; stroke-width: 3; }
.dash { fill: none; stroke: #aaa; stroke-width: 1; stroke-dasharray: 4 2; }
.axis { fill: none; stroke: #8c8c8c; stroke-width: 1; stroke-dasharray: 12 3 3 3; }
.party { fill: none; stroke: #8a8a8a; stroke-width: 6; }
.party-in { fill: none; stroke: #eee; stroke-width: 3; }
.col { fill: #fff; stroke: #808080; stroke-width: 1; }
.note text { fill: #888; font: 7px "Liberation Sans", sans-serif; text-anchor: middle; }
.fine text { fill: #999; font: 5px "Liberation Sans", sans-serif; text-anchor: middle; }
.marker { fill: #808080; }
.bubble { fill: #fff; stroke: #808080; stroke-width: 1; }
.mark-no, .mark-ref { fill: #777; font: 8px "Liberation Sans", sans-serif; text-anchor: middle; }
.mark-ref { font-size: 6px; }
.area { fill: #ff9147; stroke: #b04a10; stroke-width: 1; mix-blend-mode: multiply; }
.lead { stroke: #8b0000; stroke-width: 2; stroke-dasharray: 3 3; }
.head { fill: none; stroke: #8b0000; stroke-width: 2; }
.red { stroke: #c80000; stroke-width: 3; }
.red-dot { fill: #c80000; }
.big text { fill: #111; font: bold 14px "Liberation Sans", sans-serif; text-anchor: middle; }
.small text { fill: #222; font: 7px "Liberation Sans", sans-serif; text-anchor: middle; }
.sel { fill: none; stroke: #3a92d8; stroke-width: 1; stroke-dasharray: 3 2; }
.sq { fill: #2b7cc0; stroke: #143f63; stroke-width: 1; }
.pts { fill: #ab9300; stroke: #5e4c00; stroke-width: 1; }
.rule { fill: #fafaf0; }
.corner { fill: #4f4f4f; }
.span { fill: #72b5e4; }
.edge { stroke: #000; stroke-width: 1; }
.t-min { fill: none; stroke: #000; stroke-width: 3; stroke-dasharray: 1 9.68; }
.t-maj { fill: none; stroke: #000; stroke-width: 5; stroke-dasharray: 1 20.36; }
.nums text { fill: #000; font: 8px "Liberation Sans", sans-serif; text-anchor: middle; }
```
